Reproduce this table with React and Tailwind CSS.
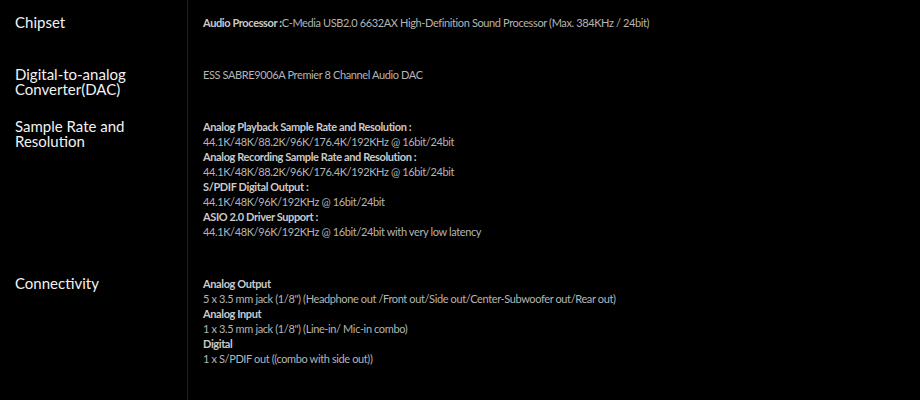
const specs = [
  {
    label: ["Chipset"],
    lines: [
      [
        { b: "Audio Processor :" },
        "C-Media USB2.0 6632AX High-Definition Sound Processor (Max. 384KHz / 24bit)"
      ]
    ]
  },
  {
    label: ["Digital-to-analog", "Converter(DAC)"],
    lines: [["ESS SABRE9006A Premier 8 Channel Audio DAC"]]
  },
  {
    label: ["Sample Rate and", "Resolution"],
    lines: [
      [{ b: "Analog Playback Sample Rate and Resolution :" }],
      ["44.1K/48K/88.2K/96K/176.4K/192KHz @ 16bit/24bit"],
      [{ b: "Analog Recording Sample Rate and Resolution :" }],
      ["44.1K/48K/88.2K/96K/176.4K/192KHz @ 16bit/24bit"],
      [{ b: "S/PDIF Digital Output :" }],
      ["44.1K/48K/96K/192KHz @ 16bit/24bit"],
      [{ b: "ASIO 2.0 Driver Support :" }],
      ["44.1K/48K/96K/192KHz @ 16bit/24bit with very low latency"]
    ]
  },
  {
    label: ["Connectivity"],
    lines: [
      [{ b: "Analog Output" }],
      [
        "5 x 3.5 mm jack (1/8\") (Headphone out /Front out/Side out/Center-Subwoofer out/Rear out)"
      ],
      [{ b: "Analog Input" }],
      ["1 x 3.5 mm jack (1/8\") (Line-in/ Mic-in combo)"],
      [{ b: "Digital" }],
      ["1 x S/PDIF out ((combo with side out))"]
    ]
  }
];

function SpecRow({ spec, last }) {
  return (
    <div className={`grid grid-cols-[188px_1fr] ${last ? "flex-1" : ""}`}>
      <div className="border-r border-[#1f1f1f] pl-[15px] pr-4 pt-[15px] text-[15px] leading-[15px] text-[#f2f2f2]">
        {spec.label.map((t) => (
          <div key={t}>{t}</div>
        ))}
      </div>
      <div className="pl-[15px] pt-[15px] pb-[22px] text-[11px] leading-[15px] tracking-[-0.38px] text-[#b4b4b4]">
        {spec.lines.map((parts, i) => (
          <div key={i} className="whitespace-nowrap">
            {parts.map((p, j) =>
              typeof p === "string" ? (
                <span key={j}>{p}</span>
              ) : (
                <span key={j} className="font-bold text-[#cacaca]">
                  {p.b}
                </span>
              )
            )}
          </div>
        ))}
      </div>
    </div>
  );
}

export default function App() {
  return (
    <div
      className="flex min-h-screen w-full flex-col bg-black"
      style={{ fontFamily: 'Lato, "Open Sans", sans-serif' }}
    >
      {specs.map((s, i) => (
        <SpecRow key={i} spec={s} last={i === specs.length - 1} />
      ))}
    </div>
  );
}
